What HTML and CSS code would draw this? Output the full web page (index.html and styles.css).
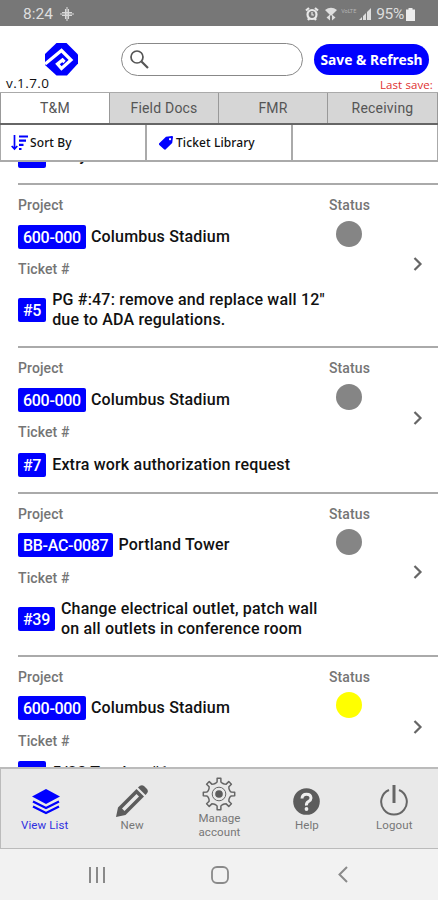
FILE: index.html
```html
<!DOCTYPE html>
<html lang="en">
<head>
    <meta charset="UTF-8">
    <meta name="viewport" content="width=device-width, initial-scale=1.0">
    <title>Tickets</title>
    <link rel="stylesheet" href="styles.css">
</head>
<body>
    <div class="status-bar">
        <span class="time">8:24</span>
        <svg class="slack" width="14" height="14" viewBox="0 0 14 14" fill="none" stroke="#d8d8d8" stroke-width="1.1">
            <path d="M5.500 2v10M8.500 2v10M2 5.500h10M2 8.500h10M7 0v14M0 7h14"/>
        </svg>
        <div class="status-icons">
            <svg width="14" height="14" viewBox="0 0 14 14" fill="none" stroke="#e8e8e8" stroke-width="2.2">
                <circle cx="7" cy="7.5" r="4.5"/>
                <path d="M1 3.5L4 1M13 3.5L10 1M3 13l1.5-2M11 13l-1.5-2"/>
                <path d="M7 5v3h2" stroke-width="1.2"/>
            </svg>
            <svg width="12" height="14" viewBox="0 0 12 14" fill="#dedede">
                <path d="M0 3Q6-1.500 12 3L6 9z"/>
                <path d="M1.500 10.500L5 7.500v6zM10.500 10.500L7 7.500v6z"/>
            </svg>
            <span class="lte">VoLTE</span>
            <svg width="12" height="12" viewBox="0 0 12 12" fill="#dedede">
                <path d="M0 12l3-3v3zM4 12V8l3-3v7zM8 12V4l4-4v12z"/>
            </svg>
            <span class="percent">95%</span>
            <svg width="9" height="13" viewBox="0 0 9 13" fill="#ededed">
                <path d="M0 1.500h2.500V0h4v1.500H9V13H0z"/>
            </svg>
        </div>
    </div>

    <header class="header">
        <div class="brand">
            <svg class="logo" width="33" height="33" viewBox="0 0 33 33">
                <path fill="#0000ff" d="M11.500 0h10L33 11.500v9L22 32.500H11.500L0 22V11z"/>
                <path fill="none" stroke="#fff" stroke-width="3.200" d="M0 21L16.500 7.500 26 17l-9.500 8.500-4-4.500 5-4 2 2"/>
            </svg>
            <span class="version">v.1.7.0</span>
        </div>
        <div class="search">
            <svg width="19" height="19" viewBox="0 0 19 19" fill="none" stroke="#555">
                <circle cx="7" cy="7" r="6" stroke-width="1.700"/>
                <path d="M11.500 11.500l6.500 6.500" stroke-width="2.200"/>
            </svg>
        </div>
        <div class="save">
            <button class="save-btn">Save &amp; Refresh</button>
            <span class="last-save">Last save:</span>
        </div>
    </header>

    <div class="tabs">
        <div class="tab active">T&amp;M</div>
        <div class="tab">Field Docs</div>
        <div class="tab">FMR</div>
        <div class="tab">Receiving</div>
    </div>

    <div class="filters">
        <div class="filter sort">
            <svg width="18" height="16" viewBox="0 0 18 16" fill="none" stroke="#0000ff">
                <path d="M3.500 0v14M.7 11l2.800 3 2.800-3" stroke-width="1.700"/>
                <path d="M8 1.500h9M8 5.700h7M8 9.900h4.500M8 14h2.500" stroke-width="2.200"/>
            </svg>
            <span>Sort By</span>
        </div>
        <div class="filter library">
            <svg width="14" height="14" viewBox="0 0 14 14">
                <path fill="#0000ff" fill-rule="evenodd" d="M0 7.500L7 .8 13 0q1 0 1 1l-.8 6L6.500 13.500Q5.800 14 5 13.300L.3 9Q-.3 8.200 0 7.500zM11 2a1.100 1.100 0 1 0 .1 0z"/>
            </svg>
            <span>Ticket Library</span>
        </div>
        <div class="filter"></div>
    </div>

    <main class="list">
        <article class="ticket partial">
            <div class="ticket-row">
                <span class="badge">#3</span>
                <p class="title">Daily</p>
            </div>
        </article>

        <article class="ticket">
            <div class="info">
                <p class="label">Project</p>
                <div class="project"><span class="badge">600-000</span><p class="title">Columbus Stadium</p></div>
                <p class="label">Ticket #</p>
                <div class="ticket-row">
                    <span class="badge">#5</span>
                    <p class="title">PG #:47: remove and replace wall 12"<br>due to ADA regulations.</p>
                </div>
            </div>
            <div class="status"><p class="label">Status</p><span class="dot"></span></div>
            <svg class="chevron" width="10" height="16" viewBox="0 0 10 16"><path d="M1.500 2l6 6-6 6"/></svg>
        </article>

        <article class="ticket">
            <div class="info">
                <p class="label">Project</p>
                <div class="project"><span class="badge">600-000</span><p class="title">Columbus Stadium</p></div>
                <p class="label">Ticket #</p>
                <div class="ticket-row">
                    <span class="badge">#7</span>
                    <p class="title">Extra work authorization request</p>
                </div>
            </div>
            <div class="status"><p class="label">Status</p><span class="dot"></span></div>
            <svg class="chevron" width="10" height="16" viewBox="0 0 10 16"><path d="M1.500 2l6 6-6 6"/></svg>
        </article>

        <article class="ticket">
            <div class="info">
                <p class="label">Project</p>
                <div class="project"><span class="badge">BB-AC-0087</span><p class="title">Portland Tower</p></div>
                <p class="label">Ticket #</p>
                <div class="ticket-row">
                    <span class="badge">#39</span>
                    <p class="title">Change electrical outlet, patch wall<br>on all outlets in conference room</p>
                </div>
            </div>
            <div class="status"><p class="label">Status</p><span class="dot"></span></div>
            <svg class="chevron" width="10" height="16" viewBox="0 0 10 16"><path d="M1.500 2l6 6-6 6"/></svg>
        </article>

        <article class="ticket">
            <div class="info">
                <p class="label">Project</p>
                <div class="project"><span class="badge">600-000</span><p class="title">Columbus Stadium</p></div>
                <p class="label">Ticket #</p>
                <div class="ticket-row">
                    <span class="badge">#8</span>
                    <p class="title">5/23 Tracker #1</p>
                </div>
            </div>
            <div class="status"><p class="label">Status</p><span class="dot yellow"></span></div>
            <svg class="chevron" width="10" height="16" viewBox="0 0 10 16"><path d="M1.500 2l6 6-6 6"/></svg>
        </article>
    </main>

    <nav class="bottom-nav">
        <a class="nav-item active">
            <svg class="layers" width="28" height="26" viewBox="0 0 28 26">
                <path fill="#0000ff" d="M14 0l14 7.500L14 15 0 7.500z"/>
                <path fill="none" stroke="#0000ff" stroke-width="2.300" d="M1 12.500l13 6.500 13-6.500M1 17.500L14 24l13-6.500"/>
            </svg>
            <span>View List</span>
        </a>
        <a class="nav-item new">
            <svg width="32" height="32" viewBox="0 0 32 32">
                <path fill="#5c5c5c" fill-rule="evenodd" d="M0 32l2-9.500L20.500 4l7.500 7.500L9.500 30zM6 23.500l2.500 2.500L23 11.500 20.500 9z"/>
                <path fill="#5c5c5c" d="M22 2.500l2-1.700q2-1.300 4 .2l3 3q1.500 2 .2 4L29.500 10z"/>
            </svg>
            <span>New</span>
        </a>
        <a class="nav-item account">
            <svg width="34" height="34" viewBox="-17 -17 34 34" fill="none" stroke="#666" stroke-width="1.500" stroke-linejoin="round">
                <path id="gear"/>
                <circle r="6.800" stroke-width="1"/>
                <circle r="3.800" fill="#5c5c5c" stroke="none"/>
            </svg>
            <span>Manage<br>account</span>
        </a>
        <a class="nav-item">
            <svg width="27" height="27" viewBox="0 0 27 27">
                <circle cx="13.500" cy="13.500" r="13.300" fill="#5c5c5c"/>
                <path fill="none" stroke="#eee" stroke-width="3" d="M9 10.500Q9.200 6.200 13.500 6.200T18 10Q18 12 15.500 13.500T13.500 17.500"/>
                <circle cx="13.500" cy="21" r="1.900" fill="#eee"/>
            </svg>
            <span>Help</span>
        </a>
        <a class="nav-item logout">
            <svg width="28" height="31" viewBox="0 0 28 31" fill="none" stroke="#666">
                <path stroke-width="2" d="M9 5A12.800 12.800 0 1 0 19 5"/>
                <path stroke-width="3" d="M14 0v18"/>
            </svg>
            <span>Logout</span>
        </a>
    </nav>

    <div class="system-nav">
        <svg width="16" height="16" viewBox="0 0 16 16" fill="none" stroke="#8a8a8a" stroke-width="2"><path d="M1 0v16M8 0v16M15 0v16"/></svg>
        <svg width="18" height="18" viewBox="0 0 18 18" fill="none" stroke="#8a8a8a" stroke-width="1.800"><rect x="1" y="1" width="16" height="16" rx="5"/></svg>
        <svg width="10" height="17" viewBox="0 0 10 17" fill="none" stroke="#8a8a8a" stroke-width="2"><path d="M9 1L1.500 8.500 9 16"/></svg>
    </div>

    <script>
        // gear outline
        const teeth = 8;
        const points = [];
        for (let i = 0; i < teeth; i++) {
            [[-0.38, 11.3], [-0.2, 12.2], [-0.15, 15.8], [0.15, 15.8], [0.2, 12.2], [0.38, 11.3]].forEach(([offset, r]) => {
                const a = (i + offset) * 2 * Math.PI / teeth - Math.PI / 2;
                points.push((r * Math.cos(a)).toFixed(2) + ' ' + (r * Math.sin(a)).toFixed(2));
            });
        }
        document.getElementById('gear').setAttribute('d', 'M' + points.join('L') + 'Z');
    </script>
</body>
</html>
```
FILE: styles.css
```css
* {
    margin: 0;
    padding: 0;
    box-sizing: border-box;
}

body {
    width: 438px;
    height: 900px;
    display: flex;
    flex-direction: column;
    overflow: hidden;
    background: #fff;
    color: #111;
    font-family: Roboto, sans-serif;
}

svg {
    display: block;
    flex: none;
}

.status-bar {
    height: 26px;
    flex: none;
    display: flex;
    align-items: center;
    padding: 2px 23px 0 23px;
    background: #777;
    color: #dedede;
    font-size: 15.5px;
}

.slack {
    margin-left: 7px;
}

.status-icons {
    margin-left: auto;
    display: flex;
    align-items: center;
}

.status-icons svg:nth-of-type(2) {
    margin-left: 6px;
}

.lte {
    width: 15px;
    margin: -7px 3px 0 4px;
    font-size: 5.5px;
    color: #b5b5b5;
}

.percent {
    margin: 0 2px 0 5px;
    letter-spacing: -0.3px;
}

.header {
    height: 66px;
    flex: none;
    display: flex;
    align-items: flex-start;
}

.brand {
    width: 121px;
    padding: 17px 0 0 6px;
}

.logo {
    margin-left: 39px;
}

.version {
    display: block;
    font-family: "Open Sans", sans-serif;
    font-size: 13.5px;
    line-height: 15px;
    letter-spacing: 0.4px;
}

.search {
    width: 182px;
    height: 33px;
    margin-top: 17px;
    padding: 6px 0 0 8px;
    border: 1px solid #888;
    border-radius: 17px;
}

.save {
    margin: 18px 0 0 11px;
    width: 115px;
    display: flex;
    flex-direction: column;
}

.save-btn {
    height: 31px;
    border: none;
    border-radius: 16px;
    background: #0000ff;
    color: #fff;
    font: bold 13.8px/31px "Noto Sans", sans-serif;
    white-space: nowrap;
}

.last-save {
    margin-right: -4px;
    text-align: right;
    color: #e03030;
    font: 11.5px/19px "Open Sans", sans-serif;
    letter-spacing: 0.1px;
}

.tabs {
    height: 33px;
    flex: none;
    display: grid;
    grid-template-columns: 110px 109px 109px 110px;
    border-top: 1px solid #aaa;
    border-bottom: 2px solid #666;
}

.tab {
    border-right: 1px solid #999;
    background: #d6d6d6;
    color: #555;
    font-size: 14px;
    line-height: 31px;
    height: 30px;
    letter-spacing: 0.2px;
    text-align: center;
}

.tab.active {
    border-left: 1px solid #999;
    background: #fff;
}

.filters {
    height: 37px;
    flex: none;
    display: grid;
    grid-template-columns: 146px 146px 146px;
    border-bottom: 2px solid #aaa;
}

.filter {
    display: flex;
    align-items: center;
    border: solid #aaa;
    border-width: 0 1px;
    font: 500 12px "Noto Sans", sans-serif;
    letter-spacing: 0.1px;
}

.sort {
    padding-left: 10px;
    gap: 1px;
}

.library {
    padding-left: 12px;
    gap: 3px;
}

.list {
    flex: 1;
    min-height: 0;
    overflow: hidden;
    padding-left: 18px;
}

.ticket {
    display: flex;
    padding: 12px 0 15.25px;
    border-bottom: 2px solid #aaa;
}

.ticket.partial {
    margin-top: -18.25px;
    padding-top: 0;
}

.info {
    width: 311px;
}

.label {
    color: #757575;
    font-size: 14px;
    font-weight: 500;
    line-height: 16px;
    letter-spacing: 0.1px;
}

.project,
.ticket-row {
    display: flex;
    align-items: center;
}

.project {
    margin: 11.5px 0 12.5px;
}

.info .ticket-row {
    margin-top: 12.5px;
    margin-bottom: -0.25px;
}

.badge {
    height: 24px;
    padding: 0 5px;
    flex: none;
    border-radius: 2px;
    background: #0000ff;
    color: #fff;
    font-size: 16px;
    font-weight: 500;
    line-height: 25px;
    letter-spacing: -0.3px;
}

.title {
    margin-left: 5px;
    padding: 0.75px 0;
    font-size: 16px;
    font-weight: 500;
    line-height: 20px;
    letter-spacing: 0.19px;
    white-space: nowrap;
}

.info .ticket-row .title {
    margin-left: 6px;
}

.status {
    width: 42px;
}

.dot {
    display: block;
    width: 26px;
    height: 26px;
    margin: 7.5px 0 0 7px;
    border-radius: 50%;
    background: #858585;
}

.dot.yellow {
    background: #ffff00;
}

.chevron {
    align-self: center;
    margin-left: 42px;
    fill: none;
    stroke: #666;
    stroke-width: 2.2;
}

.bottom-nav {
    height: 82px;
    flex: none;
    display: grid;
    grid-template-columns: repeat(5, 1fr);
    border: 1px solid #bbb;
    border-top-width: 2px;
    border-right: none;
    background: #e9e9e9;
}

.nav-item {
    display: flex;
    flex-direction: column;
    align-items: center;
    justify-content: flex-end;
    padding-bottom: 16px;
    color: #777;
    font-size: 11.5px;
    line-height: 14px;
    letter-spacing: 0.1px;
    text-align: center;
}

.nav-item span {
    margin-top: 3px;
}

.nav-item.active {
    color: #3030e0;
}

.layers {
    margin-left: 2px;
}

.nav-item.new span {
    margin-top: 1px;
}

.nav-item.logout span {
    margin-top: 2px;
}

.nav-item.account {
    padding-bottom: 9px;
}

.nav-item.account span {
    margin-top: 0;
}

.system-nav {
    height: 51px;
    flex: none;
    display: flex;
    align-items: center;
    padding-left: 89px;
    background: #f2f2f2;
}

.system-nav svg:nth-child(2) {
    margin-left: 106px;
}

.system-nav svg:nth-child(3) {
    margin-left: 109px;
}
```
